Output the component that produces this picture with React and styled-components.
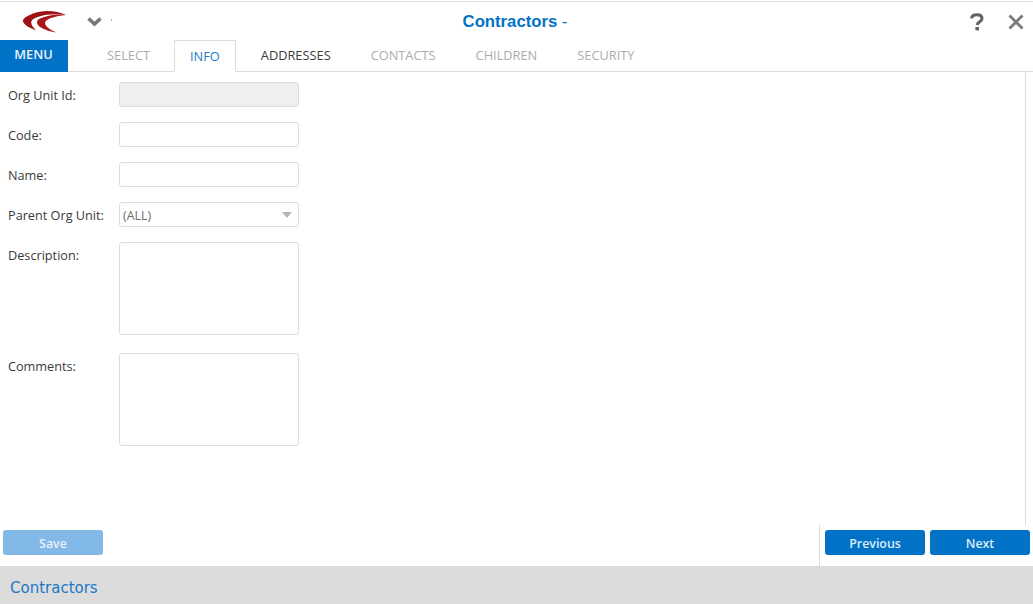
import React from "react";
import styled, { createGlobalStyle } from "styled-components";

const Global = createGlobalStyle`
  html, body { margin: 0; padding: 0; background: #fff; }
  * { box-sizing: border-box; }
  body { font-family: "Open Sans", "Liberation Sans", sans-serif; font-size: 12.7px; color: #333; }
`;
const Page = styled.div`
  width: 1033px; height: 604px; display: flex; flex-direction: column; overflow: hidden;
`;
const Header = styled.header`
  height: 40px; margin-top: 1px; border-top: 1px solid #e2e2e2; display: grid;
  grid-template-columns: 1fr auto 1fr; align-items: center; flex: none;
`;
const HeaderLeft = styled.div`
  display: flex; align-items: center; padding-left: 22px; gap: 19px;
`;
const Dot = styled.span`
  width: 1px; height: 2px; background: #b0b0b0; margin-left: -10px; margin-top: -3px;
`;
const HeaderRight = styled.div`
  display: flex; align-items: center; justify-content: flex-end; gap: 24px; padding-right: 9px;
`;
const Title = styled.h1`
  margin: 0; font: bold 16.7px "Liberation Sans", Arial, sans-serif; color: #0272c6;
  white-space: pre; padding-right: 3px;
`;
const TitleDash = styled.span`font-weight: normal;`;
const TabBar = styled.nav`
  height: 32px; display: flex; align-items: stretch; border-bottom: 1px solid #dcdcdc; flex: none;
  margin-top: -1px;
`;
const MenuButton = styled.div`
  width: 68px; margin-bottom: -1px; background: #0272c6; color: #e8f3fb; font-weight: 600; font-size: 12.8px;
  display: flex; align-items: center; justify-content: center; padding: 0 1px 4px 0; margin-right: 19px;
`;
const Tab = styled.div`
  display: flex; align-items: center; font-size: 12.8px;
  padding: ${p => (p.$active ? "0 15px 1px" : "0 20px 1px")};
  color: ${p => (p.$active ? "#1f7cc8" : p.$dark ? "#3c3c3c" : "#acacac")};
  ${p => p.$active && `
    margin: 0 5px -1px 4px; border: 1px solid #dcdcdc; border-bottom: 1px solid #fff; background: #fff;
  `}
`;
const Main = styled.div`
  flex: 1; display: flex; min-height: 0;
`;
const Form = styled.form`
  flex: 1; padding: 10px 0 0 8px; display: flex; flex-direction: column; gap: 15px;
`;
const RightRule = styled.div`
  width: 8px; border-left: 1px solid #dcdcdc; flex: none;
`;
const Row = styled.div`
  display: grid; grid-template-columns: 111px 180px; align-items: start;
  margin-bottom: ${p => p.$mb || 0}px;
`;
const Label = styled.label`
  font-size: 12.7px; color: #3a3a3a; height: 25px; line-height: 27px; white-space: nowrap;
`;
const Input = styled.div`
  height: 25px; border: 1px solid #dcdcdc; border-radius: 3px;
  background: ${p => (p.$disabled ? "#efefef" : "#fff")};
`;
const Select = styled(Input)`
  display: flex; align-items: center; justify-content: space-between; padding: 2px 6px 0 3px;
  color: #6c6c6c; font-size: 12.4px;
`;
const Arrow = styled.span`
  width: 0; height: 0; border-left: 5.5px solid transparent; border-right: 5.5px solid transparent;
  border-top: 6px solid #b5b5b5; margin-top: -1px;
`;
const TextArea = styled(Input)`height: 93px;`;
const ActionBar = styled.div`
  height: 41px; display: flex; justify-content: space-between; flex: none;
`;
const ButtonGroup = styled.div`
  display: flex; gap: 5px; padding: 5px 3px 0 5px; ${p => p.$divided && "border-left: 1px solid #dcdcdc;"}
`;
const Button = styled.div`
  width: 100px; height: 25px; border-radius: 3px; display: flex; align-items: center; justify-content: center;
  font-weight: 600; font-size: 12.4px; padding-top: 2px; color: ${p => (p.$disabled ? "#e6f1fa" : "#dcecf8")};
  background: ${p => (p.$disabled ? "#82b9e6" : "#0272c6")};
`;
const SaveGroup = styled(ButtonGroup)`padding-left: 3px;`;
const Footer = styled.footer`
  height: 38px; background: #dcdcdc; color: #1a78c8; flex: none; display: flex; align-items: center;
  padding: 6px 0 0 10px; font: 15px "DejaVu Sans", Verdana, sans-serif;
`;

const Logo = () => (
  <svg width="46" height="24" viewBox="0 0 46 24" style={{ display: "block", marginTop: -2, filter: "blur(0.3px)" }}>
    <path fill="#9e1216" d="M44 6C34 1 20 1 11 4.5C5 7 0.5 9.5 1 12.5C2 16 8 19 14 21.5C10.5 18 8.5 15 9.5 12C11.5 8 26 3.5 44 6Z" />
    <path fill="#a8161a" d="M44 6C34 4.5 25 6.5 18 9.5C14 11.5 14 15 18 18C22 20.5 27 22.5 34 23.5C28 20.5 22.5 17 23 13.5C24 10 33 7 44 6Z" />
  </svg>
);
const Chevron = () => (
  <svg width="15" height="11" viewBox="0 0 15 11" style={{ display: "block", marginTop: -1 }}>
    <path d="M1.5 2.5L7.5 8L13.5 2.5" fill="none" stroke="#787878" strokeWidth="3.6" />
  </svg>
);
const Help = () => (
  <svg width="14" height="18" viewBox="0 0 14 18" style={{ display: "block" }}>
    <path d="M1.6 5.4C1.8 3 4 1.8 6.8 1.8C9.8 1.8 12 3.2 12 5.6C12 9 7.6 8.6 7.2 12" fill="none" stroke="#616161" strokeWidth="3" />
    <rect x="5.4" y="14" width="3.6" height="3.4" fill="#616161" />
  </svg>
);
const Close = () => (
  <svg width="16" height="16" viewBox="0 0 16 16" style={{ display: "block" }}>
    <path d="M1.5 1.5L14.5 14.5M14.5 1.5L1.5 14.5" fill="none" stroke="#7b7b7b" strokeWidth="2.8" />
  </svg>
);

export default function App() {
  return (
    <Page>
      <Global />
      <Header>
        <HeaderLeft><Logo /><Chevron /><Dot /></HeaderLeft>
        <Title>Contractors <TitleDash>-</TitleDash></Title>
        <HeaderRight><Help /><Close /></HeaderRight>
      </Header>
      <TabBar>
        <MenuButton>MENU</MenuButton>
        <Tab>SELECT</Tab>
        <Tab $active>INFO</Tab>
        <Tab $dark>ADDRESSES</Tab>
        <Tab>CONTACTS</Tab>
        <Tab>CHILDREN</Tab>
        <Tab>SECURITY</Tab>
      </TabBar>
      <Main>
        <Form>
          <Row><Label>Org Unit Id:</Label><Input $disabled /></Row>
          <Row><Label>Code:</Label><Input /></Row>
          <Row><Label>Name:</Label><Input /></Row>
          <Row><Label>Parent Org Unit:</Label><Select>(ALL)<Arrow /></Select></Row>
          <Row $mb={3}><Label>Description:</Label><TextArea /></Row>
          <Row><Label>Comments:</Label><TextArea /></Row>
        </Form>
        <RightRule />
      </Main>
      <ActionBar>
        <SaveGroup><Button $disabled>Save</Button></SaveGroup>
        <ButtonGroup $divided><Button>Previous</Button><Button>Next</Button></ButtonGroup>
      </ActionBar>
      <Footer>Contractors</Footer>
    </Page>
  );
}
